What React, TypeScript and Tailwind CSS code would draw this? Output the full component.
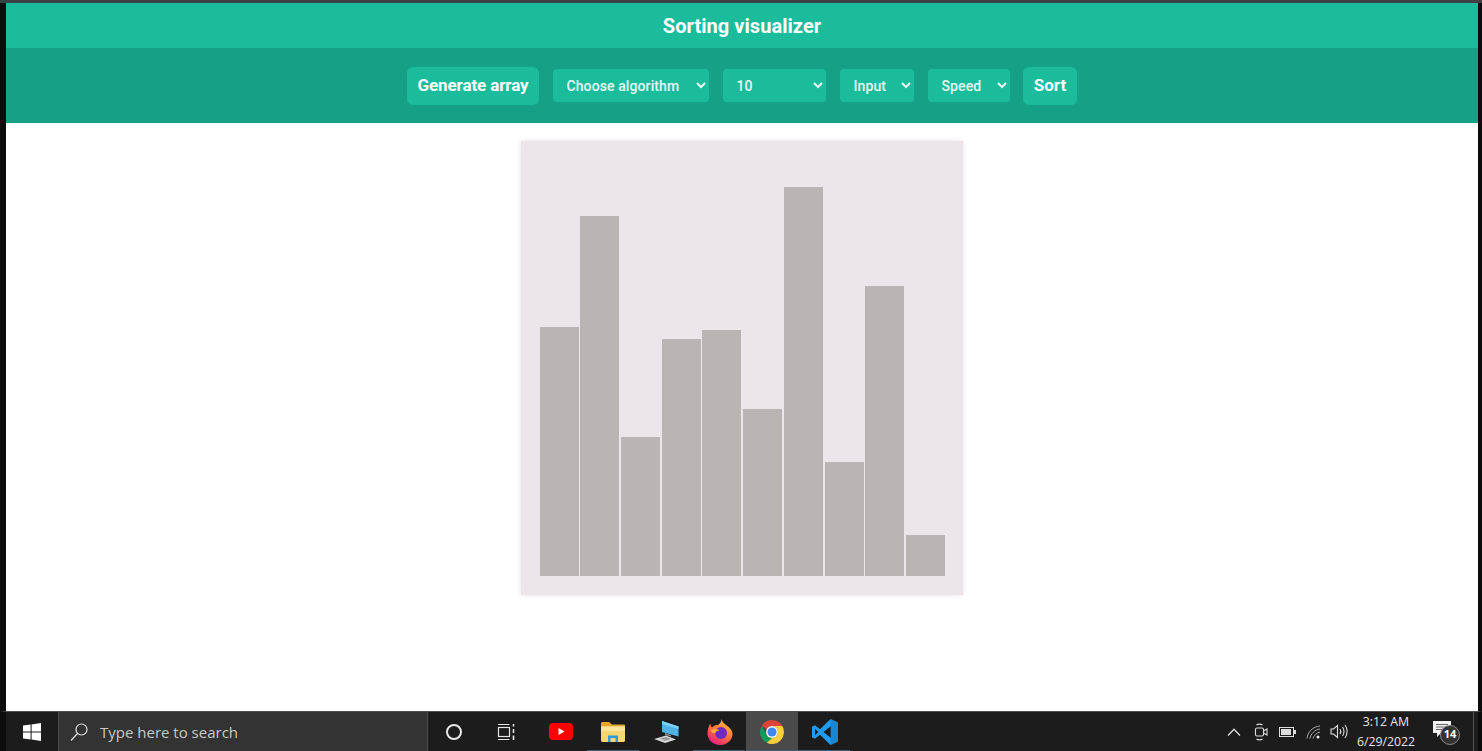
const bars = [249, 360, 139, 237, 246, 167, 389, 114, 290, 41];

function PillSelect({ width, label }: { width: string; label: string }) {
  return (
    <select className={`h-[33px] rounded-[4px] bg-[#1abc9c] pl-[9.5px] pr-[5px] text-[14px] font-medium tracking-[0.1px] text-white/90 ${width}`} defaultValue={label}>
      <option>{label}</option>
    </select>
  );
}

function TaskIcon({ children, active, running }: { children: React.ReactNode; active?: boolean; running?: boolean }) {
  return (
    <div
      className={`flex h-full w-[52px] shrink-0 items-center justify-center ${active ? "bg-[#4a4a4a]" : ""} ${running ? "shadow-[inset_0_-1px_0_#3f5f78]" : ""}`}
    >
      {children}
    </div>
  );
}

function WindowsLogo() {
  return (
    <svg width="18" height="18" viewBox="0 0 18 18" fill="#fff">
      <path d="M0 2.6 7.6 1.5V8.4H0ZM8.6 1.4 18 0V8.4H8.6ZM0 9.4H7.6V16.4L0 15.4ZM8.6 9.4H18V18L8.6 16.6Z" />
    </svg>
  );
}

function SearchGlass() {
  return (
    <svg width="18" height="18" viewBox="0 0 18 18" fill="none" stroke="#e0e0e0" strokeWidth="1.2" className="mr-[12px]">
      <circle cx="11.500" cy="6.500" r="5.500" />
      <path d="M7.500 10.500 1 17.500" />
    </svg>
  );
}

function TaskView() {
  return (
    <svg width="18" height="18" viewBox="0 0 18 18" fill="none" stroke="#e5e5e5" strokeWidth="1.2">
      <path d="M1 1.5H12.5M1 16.5H12.5" />
      <rect x="1.5" y="4.5" width="11" height="9" />
      <path d="M16.5 1V3.5M16.5 6V10M16.5 12.5V17" strokeWidth="1.6" />
    </svg>
  );
}

function Youtube() {
  return (
    <svg width="24" height="17" viewBox="0 0 24 17">
      <rect width="24" height="17" rx="4" fill="#f00" />
      <path d="M9.5 5V12L15.5 8.5Z" fill="#fff" />
    </svg>
  );
}

function Folder() {
  return (
    <svg width="24" height="20" viewBox="0 0 24 20">
      <path d="M0 1.5C0 .7.6 0 1.4 0H8L11 2.5H23C23.6 2.5 24 3 24 3.5V6H0Z" fill="#e2a72e" />
      <path d="M0 4.5H24V18.6C24 19.4 23.4 20 22.6 20H1.4C.6 20 0 19.4 0 18.6Z" fill="#f7d774" />
      <path d="M0 4.5H24V9H0Z" fill="#fbe69b" />
      <path d="M7 20V13.5H17V20H14.5V16H9.5V20Z" fill="#2f9bd8" />
    </svg>
  );
}

function Laptop() {
  return (
    <svg width="26" height="22" viewBox="0 0 26 22">
      <path d="M8 0 24.5 5.5V15.5L8 11Z" fill="#4fb3e8" />
      <path d="M8 0 24.5 5.5V8L8 3Z" fill="#7fd0f5" />
      <path d="M11 12 17 14V15.5L11 14Z" fill="#8a8a8a" />
      <path d="M0 18 12 14.5 22 18.5 11 22Z" fill="#d5d5d5" />
      <path d="M6 17.5 12 16 17 18 11 19.8Z" fill="#9a9a9a" />
    </svg>
  );
}

function Firefox() {
  return (
    <svg width="26" height="26" viewBox="0 0 26 26" className="ml-[2px]">
      <defs>
        <linearGradient id="ffa" x1="0.8" y1="0" x2="0.2" y2="1">
          <stop offset="0" stopColor="#ffc93c" />
          <stop offset="0.5" stopColor="#ff7139" />
          <stop offset="1" stopColor="#e31587" />
        </linearGradient>
      </defs>
      <path d="M14.5 0C15 3 17 4.500 19 6 23 8.5 25.500 11.500 25.500 15 25.500 21 20 26 13 26 6 26 .5 21 .5 14.500 .5 10.500 1.500 7.500 3.500 4.500 3.500 6.500 4 7.500 5 8.500 6.500 6.500 9 6 11 6 13 4.500 14.500 2.500 14.500 0Z" fill="url(#ffa)" />
      <circle cx="14" cy="14" r="6" fill="#6e2bbd" />
      <path d="M3.500 11.500C6 9.500 10 9.500 12.500 11.500 10 11.800 8.500 12.500 8 14.500 6.500 14 4.500 13 3.500 11.500Z" fill="#ffb02e" />
    </svg>
  );
}

function Chrome() {
  return (
    <svg width="26" height="26" viewBox="0 0 48 48" className="-ml-px">
      <path d="M24 2A22 22 0 0 1 43 13H24A11 11 0 0 0 14.500 18.500L5 13A22 22 0 0 1 24 2Z" fill="#db4437" />
      <path d="M5 13 14.500 29.500A11 11 0 0 0 24 35L14.500 44A22 22 0 0 1 5 13Z" fill="#0f9d58" />
      <path d="M43 13A22 22 0 0 1 14.500 44L24 35A11 11 0 0 0 33.500 18.500 11 11 0 0 0 24 13Z" fill="#ffcd40" />
      <circle cx="24" cy="24" r="11" fill="#fff" />
      <circle cx="24" cy="24" r="8.500" fill="#4285f4" />
    </svg>
  );
}

function VsCode() {
  return (
    <svg width="26" height="26" viewBox="0 0 26 26" className="ml-[2px]">
      <path d="M18.500 0 26 3.200V22.800L18.500 26 8 15.800 3 19.800 0 18.300V7.700L3 6.200 8 10.200ZM18.700 7.300 11.500 13 18.700 18.700ZM3 9.800V16.200L6.300 13Z" fill="#1f9cf0" />
      <path d="M18.500 0 26 3.200V22.800L18.500 26Z" fill="#0065a9" opacity="0.35" />
    </svg>
  );
}

function Tray() {
  return (
    <div className="ml-auto flex h-full items-center">
      <svg width="14" height="8" viewBox="0 0 14 8" fill="none" stroke="#ddd" strokeWidth="1.3" className="mr-[13px]">
        <path d="M1 7.500 7 1.200 13 7.500" />
      </svg>
      <svg width="14" height="18" viewBox="0 0 14 18" fill="none" stroke="#ddd" strokeWidth="1.1" className="mr-[11px]">
        <path d="M2.500 2C4 .8 7 .8 8.500 2M2.500 16C4 17.200 7 17.200 8.500 16" />
        <rect x="1.500" y="5" width="8" height="8" rx="1.500" />
        <path d="M9.500 8 13 6V12L9.500 10" />
      </svg>
      <svg width="17" height="10" viewBox="0 0 17 10" className="mr-[10px]">
        <rect x=".5" y=".5" width="14" height="9" fill="none" stroke="#ddd" />
        <rect x="2" y="2" width="10" height="6" fill="#ddd" />
        <rect x="15" y="3" width="2" height="4" fill="#ddd" />
      </svg>
      <svg width="15" height="14" viewBox="0 0 15 14" fill="none" stroke="#aaa" strokeWidth="1" className="mr-[9px]">
        <path d="M1 13.500C1.500 7 7 1.500 14 1M4 13.500C4.500 9 9 4.500 14 4M7 13.500C7.500 11 11 7.500 14 7" />
        <circle cx="12" cy="12" r="1.500" fill="#eee" stroke="none" />
      </svg>
      <svg width="18" height="15" viewBox="0 0 18 15" fill="none" stroke="#ddd" strokeWidth="1.1" className="mr-[7px]">
        <path d="M1 5H3.500L7.500 1.500V13.500L3.500 10H1Z" />
        <path d="M10 5C11 6.500 11 8.500 10 10M12.500 3C14.500 5.500 14.500 9.500 12.500 12M15 1C17.800 4.500 17.800 10.500 15 14" />
      </svg>
      <div className="flex w-[62px] flex-col items-center pt-[1px] text-[12.3px] leading-[20px] text-[#e6e6e6]">
        <span>3:12 AM</span>
        <span>6/29/2022</span>
      </div>
      <div className="relative ml-[15px] mr-[17px] h-[24px] w-[24px]">
        <svg width="18" height="17" viewBox="0 0 18 17" className="absolute left-[1px] top-[1px]">
          <path d="M0 0H18V12H8L4 16V12H0Z" fill="#f2f2f2" />
          <path d="M3 3.500H15M3 6H15M3 8.500H15" stroke="#555" strokeWidth="0.9" />
        </svg>
        <span className="absolute left-[8px] top-[5px] flex h-[20px] w-[20px] items-center justify-center rounded-full border border-[#888] bg-[#333] text-[11px] font-bold text-white">14</span>
      </div>
      <div className="mr-[4px] h-full w-px bg-[#555]" />
    </div>
  );
}

export default function App() {
  return (
    <div className="flex h-[751px] w-[1482px] flex-col overflow-hidden bg-white font-['Roboto',sans-serif]">
      <div className="h-[3px] bg-[#3d4145]" />
      <div className="flex min-h-0 flex-1 border-l-[6px] border-r-[4px] border-[#0c0c0c]">
        <div className="flex min-w-0 flex-1 flex-col">
          <header className="flex h-[45px] items-center justify-center bg-[#1abc9c] text-[20px] font-bold tracking-[0.05px] text-white">
            Sorting visualizer
          </header>
          <nav className="flex h-[75px] items-center justify-center gap-[14px] bg-[#16a085]">
            <button className="h-[38px] w-[132px] rounded-[6px] bg-[#1abc9c] pt-[1px] text-[17px] font-bold tracking-[-0.1px] text-white">Generate array</button>
            <PillSelect width="w-[156px]" label="Choose algorithm" />
            <PillSelect width="w-[103px]" label="10" />
            <PillSelect width="w-[74px]" label="Input" />
            <PillSelect width="w-[82px]" label="Speed" />
            <button className="-ml-px h-[38px] w-[54px] rounded-[6px] bg-[#1abc9c] pt-[1px] text-[17px] font-bold text-white">Sort</button>
          </nav>
          <main className="flex flex-1 justify-center pt-[18px]">
            <div className="flex h-[454px] w-[442px] items-end gap-[1.7px] bg-[#ece6ea] pb-[19px] pl-[18.7px] shadow-[0_0_5px_rgba(0,0,0,0.12)]">
              {bars.map((h, i) => (
                <div key={i} className="w-[39px] bg-[#bab4b4]" style={{ height: h }} />
              ))}
            </div>
          </main>
        </div>
      </div>
      <footer className="flex h-[40px] items-center border-l-[6px] border-r-[4px] border-t border-[#0c0c0c] border-t-[#4d4d4d] bg-[#1c1c1c] font-['Open_Sans',sans-serif]">
        <div className="flex h-full w-[52px] items-center justify-center">
          <WindowsLogo />
        </div>
        <div className="flex h-full w-[370px] items-center border-x border-[#4a4a4a] bg-[#333333] pl-[11px] pt-[1px] text-[15px] text-[#c8c8c8]">
          <SearchGlass />
          Type here to search
        </div>
        <TaskIcon>
          <div className="h-[16px] w-[16px] rounded-full border-2 border-[#e8e8e8]" />
        </TaskIcon>
        <TaskIcon><TaskView /></TaskIcon>
        <div className="w-[3px]" />
        <TaskIcon><Youtube /></TaskIcon>
        <TaskIcon running><Folder /></TaskIcon>
        <div className="w-[2px]" />
        <TaskIcon><Laptop /></TaskIcon>
        <TaskIcon running><Firefox /></TaskIcon>
        <div className="w-px" />
        <TaskIcon active running><Chrome /></TaskIcon>
        <TaskIcon running><VsCode /></TaskIcon>
        <Tray />
      </footer>
    </div>
  );
}
